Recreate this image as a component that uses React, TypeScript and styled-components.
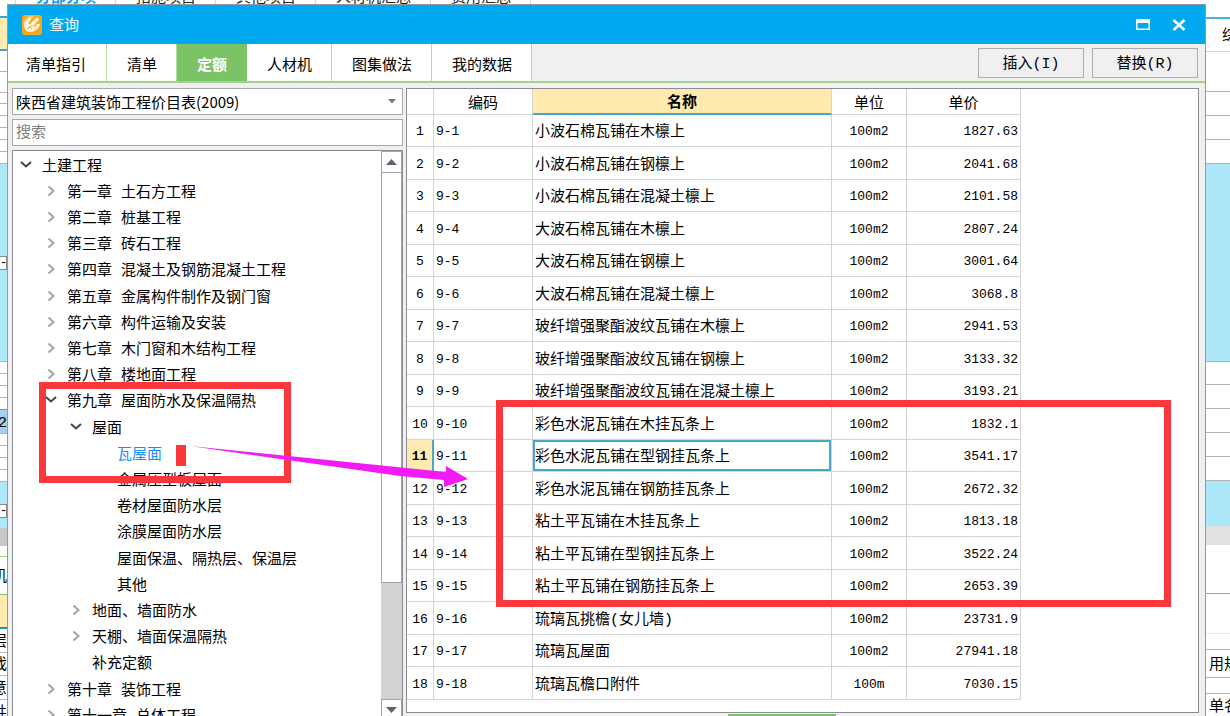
import React from "react";
import styled, { createGlobalStyle, css } from "styled-components";

const GlobalStyle = createGlobalStyle`
  *, *::before, *::after { box-sizing: border-box; }
  body {
    margin: 0;
    background: #fff;
    color: #000;
    font: 15px/20px "Liberation Mono", "Noto Sans CJK SC", monospace;
  }
  button, input, select { font: inherit; color: inherit; }
`;

const Desktop = styled.div`
  position: relative;
  display: flex;
  flex-direction: column;
  height: 100vh;
  overflow: hidden;
`;

/* ---------- host application behind the dialog ---------- */

const HostTabs = styled.nav`
  display: flex;
  align-items: flex-end;
  height: 5px;
  padding-left: 15px;
  overflow: hidden;
`;

const HostTab = styled.a<{ $active?: boolean }>`
  flex: none;
  padding: 0 19px 0 20px;
  border-left: 1px solid #d4d4d4;
  color: ${(p) => (p.$active ? "#0a9ff0" : "#222")};
  font-weight: ${(p) => (p.$active ? 700 : 400)};
  line-height: 12px;
  text-decoration: none;
  &:last-child { border-right: 1px solid #d4d4d4; }
`;

const HostBody = styled.div`
  display: flex;
  flex: 1;
  justify-content: space-between;
  min-height: 0;
`;

const Strip = styled.div<{ $width: number }>`
  width: ${(p) => p.$width}px;
  overflow: hidden;
`;

const StripCell = styled.div<{ $h: number; $bg?: string; $line?: string; $thick?: boolean; $indent?: number }>`
  display: flex;
  align-items: center;
  justify-content: ${(p) => (p.$indent === undefined ? "flex-end" : "flex-start")};
  height: ${(p) => p.$h}px;
  padding-left: ${(p) => p.$indent || 0}px;
  overflow: hidden;
  white-space: nowrap;
  background: ${(p) => p.$bg || "#fff"};
  border-bottom: ${(p) => (p.$line ? `${p.$thick ? 2 : 1}px solid ${p.$line}` : "0")};
`;

const StripText = styled.span`
  padding-top: 4px;
`;

const Expander = styled.span`
  width: 100%;
  height: 14px;
  border: 1px solid #888;
  border-left: 0;
  background: #fff;
  font-size: 12px;
  line-height: 12px;
`;

/* ---------- dialog ---------- */

const Dialog = styled.section`
  position: absolute;
  inset: 4px 24px 0 7px;
  display: flex;
  flex-direction: column;
  overflow: hidden;
  background: #f0f0f0;
  border: 1px solid #8f9aa3;
  border-bottom: 0;
`;

const TitleBar = styled.header`
  display: flex;
  align-items: center;
  flex: none;
  gap: 7px;
  height: 39px;
  padding: 0 18px 0 14px;
  background: #00a8f0;
  color: #fff;
`;

const Title = styled.h1`
  flex: 1;
  margin: 0;
  padding-top: 4px;
  font-size: 15px;
  font-weight: 400;
`;

const WindowButton = styled.button`
  display: flex;
  align-items: center;
  justify-content: center;
  width: 16px;
  height: 20px;
  margin-left: 13px;
  padding: 0;
  border: 0;
  background: none;
`;

const TabBar = styled.div`
  display: flex;
  flex: none;
  height: 39px;
  border-bottom: 2px solid #a5d18f;
`;

const Tab = styled.button<{ $active?: boolean }>`
  padding: 9px 19px 0 20px;
  border: 0;
  border-right: 1px solid #b2dba0;
  background: #fff;
  &:first-child { padding: 9px 20px 0 18px; }
  ${(p) =>
    p.$active &&
    css`
      background: #7cc267;
      border-color: #7cc267;
      color: #fff;
      font-weight: 700;
    `}
`;

const Actions = styled.div`
  display: flex;
  gap: 8px;
  margin-left: auto;
  padding: 4px 7px 3px 0;
`;

const ActionButton = styled.button`
  width: 106px;
  padding: 4px 0 0;
  border: 1px solid #adadad;
  background: #f0f0f0;
`;

const Content = styled.div`
  display: flex;
  flex: 1;
  gap: 3px;
  min-height: 0;
  padding: 5px 6px 1px 4px;
`;

const Side = styled.aside`
  display: flex;
  flex: none;
  flex-direction: column;
  gap: 4px;
  width: 391px;
`;

const SelectWrap = styled.label`
  display: flex;
  align-items: center;
  height: 27px;
  padding-right: 6px;
  border: 1px solid #a9a9a9;
  background: #fff;
`;

const Select = styled.select`
  flex: 1;
  height: 25px;
  padding: 0 3px;
  border: 0;
  outline: 0;
  appearance: none;
  background: none;
  font-family: "Noto Sans CJK SC", sans-serif;
`;

const Search = styled.input`
  flex: none;
  height: 27px;
  padding: 2px 3px 0;
  border: 1px solid #a9a9a9;
  border-radius: 0;
  outline: 0;
  background: #fff;
  &::placeholder { color: #808080; opacity: 1; }
`;

const TreePanel = styled.div`
  display: flex;
  flex: 1;
  min-height: 0;
  margin-bottom: -8px;
  border: 1px solid #8c8c94;
  border-bottom: 0;
  background: #fff;
`;

const Tree = styled.ul`
  flex: 1;
  margin: 0;
  padding: 1px 0 0;
  overflow: hidden;
  list-style: none;
`;

const TreeItem = styled.li<{ $depth: number; $selected?: boolean }>`
  height: 26px;
  padding-left: ${(p) => 7 + p.$depth * 25}px;
  color: ${(p) => (p.$selected ? "#1a8cff" : "#000")};
  &:nth-child(5n) { height: 27px; }
`;

const TreeButton = styled.button`
  display: flex;
  align-items: center;
  gap: 10px;
  height: 26px;
  padding: 0;
  border: 0;
  background: none;
  white-space: nowrap;
  svg { flex: none; }
`;

const TreeLabel = styled.span`
  padding-top: 5px;
`;

const ScrollBar = styled.div`
  display: flex;
  flex: none;
  flex-direction: column;
  width: 21px;
  background: #d2d2d2;
`;

const ScrollArrow = styled.button`
  display: flex;
  align-items: center;
  justify-content: center;
  flex: none;
  height: 22px;
  padding: 0;
  border: 1px solid #a0a4ac;
  background: #fff;
`;

const ScrollTrack = styled.div`
  flex: 1;
`;

const ScrollThumb = styled.div`
  height: 78%;
  border: 1px solid #a0a4ac;
  border-top: 0;
  background: #fff;
`;

const TablePanel = styled.main`
  flex: 1;
  min-width: 0;
  overflow: hidden;
  border: 1px solid #8c8c94;
  background: #fff;
`;

const Table = styled.table`
  width: 614px;
  table-layout: fixed;
  border-collapse: separate;
  border-spacing: 0;
`;

const Th = styled.th<{ $current?: boolean }>`
  height: 26px;
  padding: 5px 0 0;
  border-right: 1px solid #d4d4d4;
  border-bottom: 1px solid #d4d4d4;
  font-weight: 400;
  line-height: 19px;
  ${(p) =>
    p.$current &&
    css`
      background: #ffebb0;
      border-bottom: 2px solid #4ba8c4;
      font-weight: 700;
    `}
`;

const Row = styled.tr`
  height: 32px;
  &:nth-child(even) { height: 33px; }
`;

const Td = styled.td<{ $align?: "left" | "center" | "right"; $mono?: boolean; $current?: boolean; $focus?: boolean }>`
  padding: ${(p) => (p.$mono ? 3 : 5)}px 2px 0;
  border-right: 1px solid #d4d4d4;
  border-bottom: 1px solid #d4d4d4;
  text-align: ${(p) => p.$align || "left"};
  white-space: nowrap;
  font-size: ${(p) => (p.$mono ? 13 : 15)}px;
  ${(p) =>
    p.$current &&
    css`
      background: #ffebb0;
      border-right: 2px solid #4ba8c4;
      font-weight: 700;
    `}
  ${(p) => p.$focus && css`box-shadow: inset 0 0 0 2px #4ba8c4;`}
`;

const SplitHandle = styled.div`
  flex: none;
  align-self: center;
  width: 108px;
  height: 2px;
  margin-left: 350px;
  background: #7cc267;
`;

/* ---------- markup drawn over the windows ---------- */

const Highlight = styled.div<{ $x: number; $y: number; $w: number; $h: number; $solid?: boolean }>`
  position: absolute;
  left: ${(p) => p.$x}px;
  top: ${(p) => p.$y}px;
  width: ${(p) => p.$w}px;
  height: ${(p) => p.$h}px;
  border: 7px solid #fa373a;
  pointer-events: none;
  ${(p) => p.$solid && css`border: 0; background: #fa373a;`}
`;

const Arrow = styled.svg`
  position: absolute;
  left: 190px;
  top: 445px;
  pointer-events: none;
`;

/* ---------- data ---------- */

type Cell = { h: number; bg?: string; line?: string; thick?: boolean; text?: string; indent?: number; box?: boolean };

const cyan = "#ade8fa";
const grey = "#b4b4b4";
const blue = "#39a7d8";

const leftStrip: Cell[] = [
  { h: 13, line: blue, thick: true },
  { h: 33, bg: "#ffebb0", line: blue, thick: true },
  { h: 21, line: grey },
  { h: 21, line: grey },
  { h: 11, line: grey },
  { h: 12, line: grey },
  { h: 12, line: grey },
  { h: 12, line: grey },
  { h: 12, line: grey },
  { h: 12, line: grey },
  { h: 92, bg: cyan },
  { h: 14, bg: cyan, box: true },
  { h: 92, bg: cyan, line: grey },
  { h: 12, line: grey },
  { h: 12, line: grey },
  { h: 12, line: grey },
  { h: 12, line: blue },
  { h: 24, bg: "#a9cfef", line: grey, text: "2" },
  { h: 12, line: grey },
  { h: 12, line: grey },
  { h: 12, line: grey },
  { h: 12, line: grey },
  { h: 22, bg: cyan },
  { h: 14, bg: cyan, box: true },
  { h: 10, bg: cyan },
  { h: 18, bg: "#c8c8c8" },
  { h: 11, line: "#a5d18f" },
  { h: 38, text: "机", line: "#7cc267" },
  { h: 34, bg: "#ffebb0", line: "#1d96a0", thick: true },
  { h: 24, line: grey, text: "层" },
  { h: 23, line: grey, text: "戏" },
  { h: 24, line: grey, text: "意" },
  { h: 24, text: "井" },
];

const rightStrip: Cell[] = [
  { h: 14, line: "#49b4e2", thick: true },
  { h: 33, line: "#d4d4d4", text: "综", indent: 16 },
  { h: 40, line: grey },
  { h: 24, line: grey },
  { h: 24, line: grey },
  { h: 24, line: grey },
  { h: 198, bg: cyan, line: grey },
  { h: 23, line: grey },
  { h: 24, line: grey },
  { h: 24, line: grey },
  { h: 24, line: grey },
  { h: 24, line: grey },
  { h: 45, bg: cyan },
  { h: 19, bg: "#e1e1e1" },
  { h: 49, line: "#7cc267" },
  { h: 40, line: "#e8e8e8" },
  { h: 16, line: grey },
  { h: 28, line: grey, text: "用规", indent: 3 },
  { h: 16, line: grey },
  { h: 24, text: "单名", indent: 3 },
];

const hostTabs = ["分部分项", "措施项目", "其他项目", "人材机汇总", "费用汇总"];
const tabs = ["清单指引", "清单", "定额", "人材机", "图集做法", "我的数据"];

type Node = { depth: number; label: string; state: "open" | "closed" | "leaf"; selected?: boolean };
const node = (depth: number, label: string, state: Node["state"], selected = false): Node => ({ depth, label, state, selected });

const tree: Node[] = [
  node(0, "土建工程", "open"),
  node(1, "第一章 土石方工程", "closed"),
  node(1, "第二章 桩基工程", "closed"),
  node(1, "第三章 砖石工程", "closed"),
  node(1, "第四章 混凝土及钢筋混凝土工程", "closed"),
  node(1, "第五章 金属构件制作及钢门窗", "closed"),
  node(1, "第六章 构件运输及安装", "closed"),
  node(1, "第七章 木门窗和木结构工程", "closed"),
  node(1, "第八章 楼地面工程", "closed"),
  node(1, "第九章 屋面防水及保温隔热", "open"),
  node(2, "屋面", "open"),
  node(3, "瓦屋面", "leaf", true),
  node(3, "金属压型板屋面", "leaf"),
  node(3, "卷材屋面防水层", "leaf"),
  node(3, "涂膜屋面防水层", "leaf"),
  node(3, "屋面保温、隔热层、保温层", "leaf"),
  node(3, "其他", "leaf"),
  node(2, "地面、墙面防水", "closed"),
  node(2, "天棚、墙面保温隔热", "closed"),
  node(2, "补充定额", "leaf"),
  node(1, "第十章 装饰工程", "closed"),
  node(1, "第十一章 总体工程", "closed"),
];

const rows: [string, string, string][] = [
  ["小波石棉瓦铺在木檩上", "100m2", "1827.63"],
  ["小波石棉瓦铺在钢檩上", "100m2", "2041.68"],
  ["小波石棉瓦铺在混凝土檩上", "100m2", "2101.58"],
  ["大波石棉瓦铺在木檩上", "100m2", "2807.24"],
  ["大波石棉瓦铺在钢檩上", "100m2", "3001.64"],
  ["大波石棉瓦铺在混凝土檩上", "100m2", "3068.8"],
  ["玻纤增强聚酯波纹瓦铺在木檩上", "100m2", "2941.53"],
  ["玻纤增强聚酯波纹瓦铺在钢檩上", "100m2", "3133.32"],
  ["玻纤增强聚酯波纹瓦铺在混凝土檩上", "100m2", "3193.21"],
  ["彩色水泥瓦铺在木挂瓦条上", "100m2", "1832.1"],
  ["彩色水泥瓦铺在型钢挂瓦条上", "100m2", "3541.17"],
  ["彩色水泥瓦铺在钢筋挂瓦条上", "100m2", "2672.32"],
  ["粘土平瓦铺在木挂瓦条上", "100m2", "1813.18"],
  ["粘土平瓦铺在型钢挂瓦条上", "100m2", "3522.24"],
  ["粘土平瓦铺在钢筋挂瓦条上", "100m2", "2653.39"],
  ["琉璃瓦挑檐(女儿墙)", "100m2", "23731.9"],
  ["琉璃瓦屋面", "100m2", "27941.18"],
  ["琉璃瓦檐口附件", "100m", "7030.15"],
];
const currentRow = 10;

/* ---------- parts ---------- */

const HostStrip = ({ cells, width }: { cells: Cell[]; width: number }) => (
  <Strip $width={width}>
    {cells.map((c, i) => (
      <StripCell key={i} $h={c.h} $bg={c.bg} $line={c.line} $thick={c.thick} $indent={c.indent}>
        {c.box && <Expander>-</Expander>}
        {c.text && <StripText>{c.text}</StripText>}
      </StripCell>
    ))}
  </Strip>
);

const Chevron = ({ state }: { state: Node["state"] }) => (
  <svg width="12" height="12" viewBox="0 0 12 12" fill="none" aria-hidden="true">
    {state === "open" && <path d="M1 3l5 4.500L11 3" stroke="#444" strokeWidth="2" />}
    {state === "closed" && <path d="M3.500 1.500L8.500 6l-5 4.500" stroke="#a3a3a3" strokeWidth="2" />}
  </svg>
);

const AppLogo = () => (
  <svg width="20" height="20" viewBox="0 0 20 20" aria-hidden="true">
    <rect width="20" height="20" rx="3" fill="#f5a81c" />
    <path d="M1 6L7 1h6L2 11z" fill="#fbc65a" />
    <path d="M2 8l5-5c1-1 3 0 2 1L7 7c-1 1 0 3 1 2l6-6c2-1 4 1 2 3l-5 5c2 0 5-3 7-2 0 3-5 8-9 8C4 18 1 12 2 8z" fill="#fff4df" />
    <path d="M7 11l3 3M5 14l5-3 5 0" stroke="#f5b545" strokeWidth="1" fill="none" />
  </svg>
);

export default function App() {
  return (
    <Desktop>
      <GlobalStyle />
      <HostTabs>
        {hostTabs.map((t, i) => (
          <HostTab key={t} href="#" $active={i === 0}>{t}</HostTab>
        ))}
      </HostTabs>
      <HostBody>
        <HostStrip cells={leftStrip} width={7} />
        <HostStrip cells={rightStrip} width={24} />
      </HostBody>

      <Dialog role="dialog" aria-label="查询">
        <TitleBar>
          <AppLogo />
          <Title>查询</Title>
          <WindowButton aria-label="最大化">
            <svg width="14" height="11" viewBox="0 0 14 11"><path d="M0 0h14v11H0zM1.500 4v5.500h11V4z" fill="#fff" fillRule="evenodd" /></svg>
          </WindowButton>
          <WindowButton aria-label="关闭">
            <svg width="14" height="12" viewBox="0 0 14 12"><path d="M1.500 1l11 10M12.500 1l-11 10" stroke="#fff" strokeWidth="2.600" /></svg>
          </WindowButton>
        </TitleBar>

        <TabBar>
          {tabs.map((t) => (
            <Tab key={t} $active={t === "定额"}>{t}</Tab>
          ))}
          <Actions>
            <ActionButton>插入(I)</ActionButton>
            <ActionButton>替换(R)</ActionButton>
          </Actions>
        </TabBar>

        <Content>
          <Side>
            <SelectWrap>
              <Select aria-label="定额库">
                <option>陕西省建筑装饰工程价目表(2009)</option>
              </Select>
              <svg width="8" height="5" viewBox="0 0 8 5" aria-hidden="true"><path d="M0 0h8L4 4.500z" fill="#777" /></svg>
            </SelectWrap>
            <Search aria-label="搜索" placeholder="搜索" />
            <TreePanel>
              <Tree>
                {tree.map((n) => (
                  <TreeItem key={n.label} $depth={n.depth} $selected={n.selected}>
                    <TreeButton>
                      <Chevron state={n.state} />
                      <TreeLabel>{n.label}</TreeLabel>
                    </TreeButton>
                  </TreeItem>
                ))}
              </Tree>
              <ScrollBar>
                <ScrollArrow aria-label="向上滚动">
                  <svg width="11" height="6" viewBox="0 0 11 6"><path d="M5.500 0L11 6H0z" fill="#5f6370" /></svg>
                </ScrollArrow>
                <ScrollTrack><ScrollThumb /></ScrollTrack>
                <ScrollArrow aria-label="向下滚动">
                  <svg width="11" height="6" viewBox="0 0 11 6"><path d="M0 0h11L5.500 6z" fill="#5f6370" /></svg>
                </ScrollArrow>
              </ScrollBar>
            </TreePanel>
          </Side>

          <TablePanel>
            <Table>
              <colgroup>
                <col width="27" />
                <col width="99" />
                <col width="299" />
                <col width="75" />
                <col width="114" />
              </colgroup>
              <thead>
                <tr>
                  <Th aria-label="序号" />
                  <Th>编码</Th>
                  <Th $current>名称</Th>
                  <Th>单位</Th>
                  <Th>单价</Th>
                </tr>
              </thead>
              <tbody>
                {rows.map(([name, unit, price], i) => (
                  <Row key={name}>
                    <Td $align="center" $mono $current={i === currentRow}>{i + 1}</Td>
                    <Td $mono>{`9-${i + 1}`}</Td>
                    <Td $focus={i === currentRow}>{name}</Td>
                    <Td $align="center" $mono>{unit}</Td>
                    <Td $align="right" $mono>{price}</Td>
                  </Row>
                ))}
              </tbody>
            </Table>
          </TablePanel>
        </Content>
        <SplitHandle />
      </Dialog>

      <Highlight $x={39} $y={382} $w={252} $h={101} />
      <Highlight $x={176} $y={445} $w={10} $h={21} $solid />
      <Highlight $x={496} $y={400} $w={675} $h={207} />
      <Arrow width="280" height="44" viewBox="0 0 280 44" aria-hidden="true">
        <path d="M0 1L256 27V21L278 34L254 42V35L210 31z" fill="#f21af5" />
      </Arrow>
    </Desktop>
  );
}
